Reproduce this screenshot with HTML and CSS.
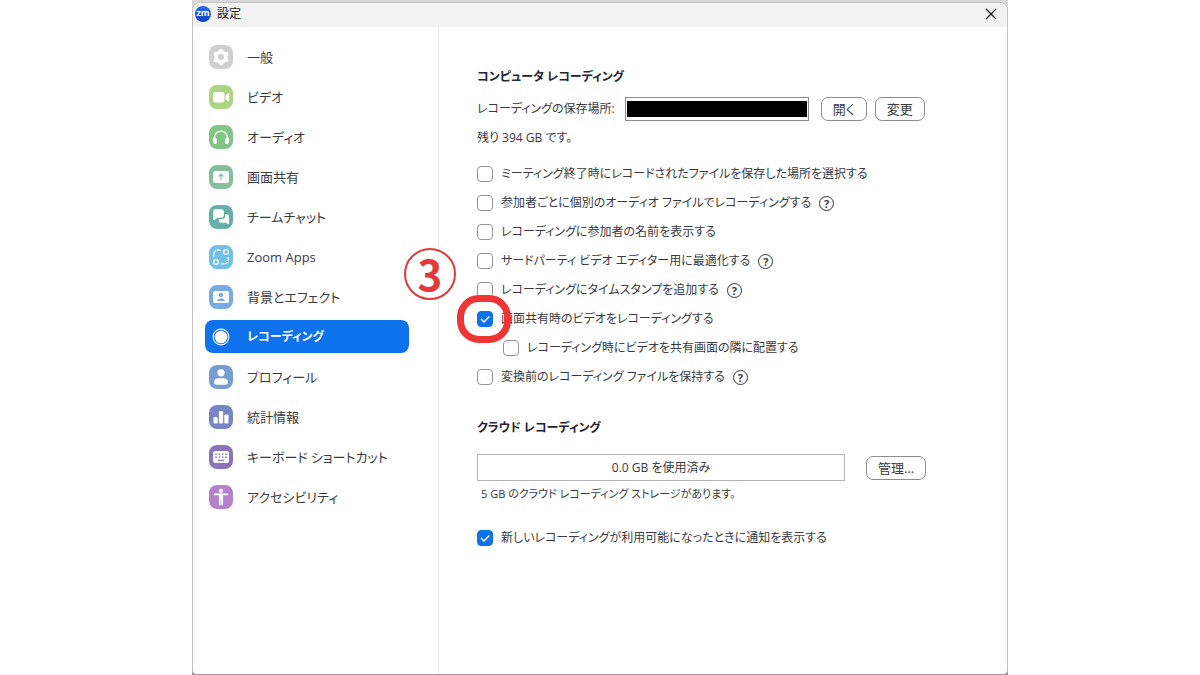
FILE: index.html
```
<!DOCTYPE html>
<html lang="ja">
    <head>
        <meta charset="utf-8">
        <title>設定</title>
        <link rel="stylesheet" href="styles.css">
    </head>
    <body>
        <div class="screen">
            <div class="window">
                <header class="titlebar">
                    <span class="logo">zm</span>
                    <span class="title">設定</span>
                    <button class="close" aria-label="閉じる">
                        <svg width="12" height="12" viewBox="0 0 12 12"><path d="M1 1L11 11M11 1L1 11" stroke="#222" stroke-width="1.3"/></svg>
                    </button>
                </header>

                <div class="content">
                    <nav class="sidebar">
                        <a href="#general" class="nav-link">
                            <svg class="icon" viewBox="0 0 24 24"><rect width="24" height="24" rx="8" fill="#cfcfcf"/><g fill="#fff"><circle cx="12" cy="12" r="6.6"/><circle cx="12" cy="5.9" r="2.2"/><circle cx="17.3" cy="9" r="2.2"/><circle cx="17.3" cy="15" r="2.2"/><circle cx="12" cy="18.1" r="2.2"/><circle cx="6.7" cy="15" r="2.2"/><circle cx="6.7" cy="9" r="2.2"/></g><circle cx="12" cy="12" r="3" fill="#cfcfcf"/></svg>
                            一般
                        </a>
                        <a href="#video" class="nav-link">
                            <svg class="icon" viewBox="0 0 24 24"><rect width="24" height="24" rx="8" fill="#add580"/><rect x="4" y="7" width="11.5" height="10.5" rx="2.5" fill="#fff"/><path d="M16.5 10.5L19 8.2Q20.2 7.4 20.2 8.8V15.7Q20.2 17 19 16.2L16.5 14Z" fill="#fff"/></svg>
                            ビデオ
                        </a>
                        <a href="#audio" class="nav-link">
                            <svg class="icon" viewBox="0 0 24 24"><rect width="24" height="24" rx="8" fill="#80c586"/><path d="M5.4 15V13A6.6 6.8 0 0 1 18.6 13V15" fill="none" stroke="#fff" stroke-width="1.3"/><rect x="4" y="12.5" width="4" height="6.5" rx="2" fill="#fff" transform="rotate(-10 6 16)"/><rect x="16" y="12.5" width="4" height="6.5" rx="2" fill="#fff" transform="rotate(10 18 16)"/></svg>
                            オーディオ
                        </a>
                        <a href="#share" class="nav-link">
                            <svg class="icon" viewBox="0 0 24 24"><rect width="24" height="24" rx="8" fill="#83be9d"/><rect x="4" y="6" width="16" height="12" rx="2.5" fill="#fff"/><path d="M12 15V9.3M9.7 11.5L12 9.2L14.3 11.5" fill="none" stroke="#83be9d" stroke-width="1.2"/></svg>
                            画面共有
                        </a>
                        <a href="#chat" class="nav-link">
                            <svg class="icon" viewBox="0 0 24 24"><rect width="24" height="24" rx="8" fill="#65b0a8"/><path d="M6 4.3H12.5A2.3 2.3 0 0 1 14.8 6.6V10.4A2.3 2.3 0 0 1 12.5 12.7H8.5L5 15.2Q4.2 15.4 4.2 14.5V6.6Q4.2 4.3 6 4.3Z" fill="#fff"/><path d="M16.3 9.3H17.8A2.2 2.2 0 0 1 20 11.5V18.6Q20 19.8 19 19.1L16.6 17.7H12A2.2 2.2 0 0 1 9.8 15.5V14H13A3.3 3.3 0 0 0 16.3 10.7Z" fill="#fff"/></svg>
                            チームチャット
                        </a>
                        <a href="#apps" class="nav-link">
                            <svg class="icon" viewBox="0 0 24 24"><rect width="24" height="24" rx="8" fill="#72c0e8"/><g fill="none" stroke="#fff" stroke-width="1.3" stroke-linecap="round"><circle cx="17" cy="7" r="2.4"/><circle cx="7" cy="17" r="2.4"/><path d="M4.8 11.5V9.5Q4.8 5.2 9 5.2H11.5" stroke-dasharray="6 2"/><path d="M12.5 18.8H15Q19.2 18.8 19.2 14.5V12.5" stroke-dasharray="6 2"/></g></svg>
                            Zoom Apps
                        </a>
                        <a href="#background" class="nav-link">
                            <svg class="icon" viewBox="0 0 24 24"><rect width="24" height="24" rx="8" fill="#78abe3"/><rect x="4" y="6" width="16" height="12" rx="2" fill="#fff"/><circle cx="12" cy="10" r="2.2" fill="#78abe3"/><path d="M8 16Q8.3 13.4 12 13.4T16 16Z" fill="#78abe3"/></svg>
                            背景とエフェクト
                        </a>
                        <a href="#recording" class="nav-link active" aria-current="page">
                            <svg class="icon" viewBox="0 0 24 24"><circle cx="12" cy="12" r="7.9" fill="none" stroke="#fff" stroke-width="1.1"/><circle cx="12" cy="12" r="6.3" fill="#fff"/></svg>
                            レコーディング
                        </a>
                        <a href="#profile" class="nav-link">
                            <svg class="icon" viewBox="0 0 24 24"><rect width="24" height="24" rx="8" fill="#779dd4"/><circle cx="12" cy="7.8" r="3.6" fill="#fff"/><path d="M5 17.5Q5 13.2 9.5 13.2H14.5Q19 13.2 19 17.5Q19 19.8 16.5 19.8H7.5Q5 19.8 5 17.5Z" fill="#fff"/></svg>
                            プロフィール
                        </a>
                        <a href="#statistics" class="nav-link">
                            <svg class="icon" viewBox="0 0 24 24"><rect width="24" height="24" rx="8" fill="#7885c5"/><g fill="#fff"><rect x="4.5" y="12" width="4.2" height="6.5" rx="1.2"/><rect x="9.9" y="6" width="4.2" height="12.5" rx="1.2"/><rect x="15.3" y="9.5" width="4.2" height="9" rx="1.2"/></g></svg>
                            統計情報
                        </a>
                        <a href="#keyboard" class="nav-link">
                            <svg class="icon" viewBox="0 0 24 24"><rect width="24" height="24" rx="8" fill="#8c74bd"/><rect x="4" y="6" width="16" height="12" rx="2.5" fill="#fff"/><path d="M6.3 9.3H18M6.3 12.2H18" stroke="#8c74bd" stroke-width="1.4" stroke-dasharray="1.5 1.8"/><path d="M9 15.3H15" stroke="#8c74bd" stroke-width="1.2"/></svg>
                            キーボード ショートカット
                        </a>
                        <a href="#accessibility" class="nav-link">
                            <svg class="icon" viewBox="0 0 24 24"><rect width="24" height="24" rx="8" fill="#b482cb"/><circle cx="12" cy="5.7" r="2" fill="#fff"/><path d="M5.5 9.3H18.5M10.8 9.5V19.5M13.2 9.5V19.5" stroke="#fff" stroke-width="1.7" stroke-linecap="round"/><rect x="10" y="8.7" width="4" height="6.5" fill="#fff"/></svg>
                            アクセシビリティ
                        </a>
                    </nav>

                    <main class="settings">
                        <h2>コンピュータ レコーディング</h2>
                        <div class="location">
                            <label for="path">レコーディングの保存場所:</label>
                            <input type="text" id="path" class="path" readonly>
                            <button class="btn">開く</button>
                            <button class="btn">変更</button>
                        </div>
                        <p class="remaining">残り 394 GB です。</p>

                        <div class="options">
                            <div class="option">
                                <input type="checkbox" id="choose">
                                <label for="choose">ミーティング終了時にレコードされたファイルを保存した場所を選択する</label>
                            </div>
                            <div class="option">
                                <input type="checkbox" id="separate">
                                <label for="separate">参加者ごとに個別のオーディオ ファイルでレコーディングする</label>
                                <button class="help" aria-label="ヘルプ">?</button>
                            </div>
                            <div class="option">
                                <input type="checkbox" id="names">
                                <label for="names">レコーディングに参加者の名前を表示する</label>
                            </div>
                            <div class="option">
                                <input type="checkbox" id="editor">
                                <label for="editor">サードパーティ ビデオ エディター用に最適化する</label>
                                <button class="help" aria-label="ヘルプ">?</button>
                            </div>
                            <div class="option">
                                <input type="checkbox" id="timestamp">
                                <label for="timestamp">レコーディングにタイムスタンプを追加する</label>
                                <button class="help" aria-label="ヘルプ">?</button>
                            </div>
                            <div class="option marked">
                                <input type="checkbox" id="sharing" checked>
                                <label for="sharing">画面共有時のビデオをレコーディングする</label>
                                <span class="ring"></span>
                                <span class="step">3</span>
                            </div>
                            <div class="option nested">
                                <input type="checkbox" id="beside">
                                <label for="beside">レコーディング時にビデオを共有画面の隣に配置する</label>
                            </div>
                            <div class="option">
                                <input type="checkbox" id="keep">
                                <label for="keep">変換前のレコーディング ファイルを保持する</label>
                                <button class="help" aria-label="ヘルプ">?</button>
                            </div>
                        </div>

                        <h2 class="cloud">クラウド レコーディング</h2>
                        <div class="storage">
                            <div class="usage">0.0 GB を使用済み</div>
                            <button class="btn">管理...</button>
                        </div>
                        <p class="quota">5 GB のクラウド レコーディング ストレージがあります。</p>
                        <div class="option">
                            <input type="checkbox" id="notify" checked>
                            <label for="notify">新しいレコーディングが利用可能になったときに通知を表示する</label>
                        </div>
                    </main>
                </div>
            </div>
        </div>
    </body>
</html>
```
FILE: styles.css
```
* {
  box-sizing: border-box;
}

body {
  margin: 0;
  background-color: #fff;
  color: #3a3a42;
  font-family: "Open Sans", "Noto Sans CJK JP", sans-serif;
  font-size: 12px;
  line-height: 20px;
  font-feature-settings: "palt";
}

h2, p {
  margin: 0;
}

button, input {
  margin: 0;
  padding: 0;
  color: inherit;
  font: inherit;
  font-feature-settings: inherit;
}

.screen {
  width: 68%;
  margin: 0 auto;
  padding-top: 2px;
  background: linear-gradient(#d8d8d8 50%, #999 50%);
}

.window {
  display: flex;
  flex-direction: column;
  min-height: calc(100vh - 2px);
  border: 1px solid #c4c4c4;
  border-bottom-color: #999;
  border-radius: 8px 8px 5px 5px;
  background-color: #fff;
  overflow: hidden;
}

.titlebar {
  display: flex;
  align-items: center;
  gap: 6px;
  height: 24px;
  padding: 0 10px 3px 2px;
  background-color: #f2f2f2;
  color: #222;
}

.logo {
  width: 16px;
  height: 16px;
  border-radius: 50%;
  background: linear-gradient(#2b6be8, #0b43c4);
  color: #fff;
  font-size: 9px;
  font-weight: bold;
  line-height: 14px;
  text-align: center;
}

.close {
  display: flex;
  margin-left: auto;
  border: 0;
  background: none;
}

.content {
  display: flex;
  flex: 1;
}

.sidebar {
  display: flex;
  flex-direction: column;
  gap: 7px;
  flex: 0 0 246px;
  padding: 13px 29px 13px 12px;
  border-right: 1px solid #e8e8e8;
  font-size: 13px;
}

.nav-link {
  display: flex;
  align-items: center;
  gap: 14px;
  height: 33px;
  padding-left: 4px;
  border-radius: 8px;
  color: inherit;
  text-decoration: none;
}

.nav-link.active {
  background-color: #0e72ed;
  color: #fff;
  font-size: 12px;
  font-weight: bold;
}

.icon {
  width: 24px;
  height: 24px;
}

.settings {
  flex: 1;
  padding: 40px 38px;
}

h2 {
  color: #232333;
  font-size: 12px;
  font-weight: bold;
}

.location {
  display: flex;
  align-items: center;
  gap: 8px;
  margin-top: 10px;
}

.path {
  width: 184px;
  height: 24px;
  margin: 0 4px 0 2px;
  padding: 3px 1px;
  border: 1px solid #8c8c8c;
  background-color: #000;
  background-clip: content-box;
}

.btn {
  height: 24px;
  padding: 0 11px;
  border: 1px solid #8c8c8c;
  border-radius: 7px;
  background-color: #fff;
  font-size: 13px;
}

.remaining {
  margin-top: 7px;
}

.options {
  display: flex;
  flex-direction: column;
  gap: 9px;
  margin-top: 16px;
}

.option {
  display: flex;
  align-items: center;
  gap: 8px;
  height: 20px;
}

.option.nested {
  padding-left: 26px;
}

.option input {
  appearance: none;
  width: 16px;
  height: 16px;
  border: 1px solid #939399;
  border-radius: 4px;
}

.option input:checked {
  border-color: #0e72ed;
  background: #0e72ed url("data:image/svg+xml,%3Csvg xmlns='http://www.w3.org/2000/svg' viewBox='0 0 14 14'%3E%3Cpath d='M3 7L6 10L11.3 4.5' fill='none' stroke='white' stroke-width='1.4'/%3E%3C/svg%3E");
}

.help {
  width: 15px;
  height: 15px;
  border: 1px solid #333;
  border-radius: 50%;
  background: none;
  font-size: 11px;
  font-weight: bold;
  line-height: 13px;
}

/* Red markers drawn over the option */
.option.marked {
  position: relative;
}

.ring {
  position: absolute;
  top: -14px;
  left: -20px;
  width: 54px;
  height: 48px;
  border: 7px solid #f03537;
  border-radius: 22px;
}

.step {
  position: absolute;
  top: -61px;
  left: -73px;
  width: 52px;
  height: 52px;
  border: 2px solid #e23a3a;
  border-radius: 50%;
  color: #e23a3a;
  font-family: "Noto Sans CJK JP", sans-serif;
  font-size: 42px;
  font-weight: bold;
  line-height: 46px;
  text-align: center;
}

.cloud {
  margin-top: 31px;
}

.storage {
  display: flex;
  align-items: center;
  gap: 21px;
  margin-top: 16px;
}

.usage {
  flex: 0 1 368px;
  height: 27px;
  border: 1px solid #b4b4b8;
  line-height: 25px;
  text-align: center;
}

.quota {
  margin: 3px 0 24px;
  padding-left: 4px;
  font-size: 11px;
}
```
